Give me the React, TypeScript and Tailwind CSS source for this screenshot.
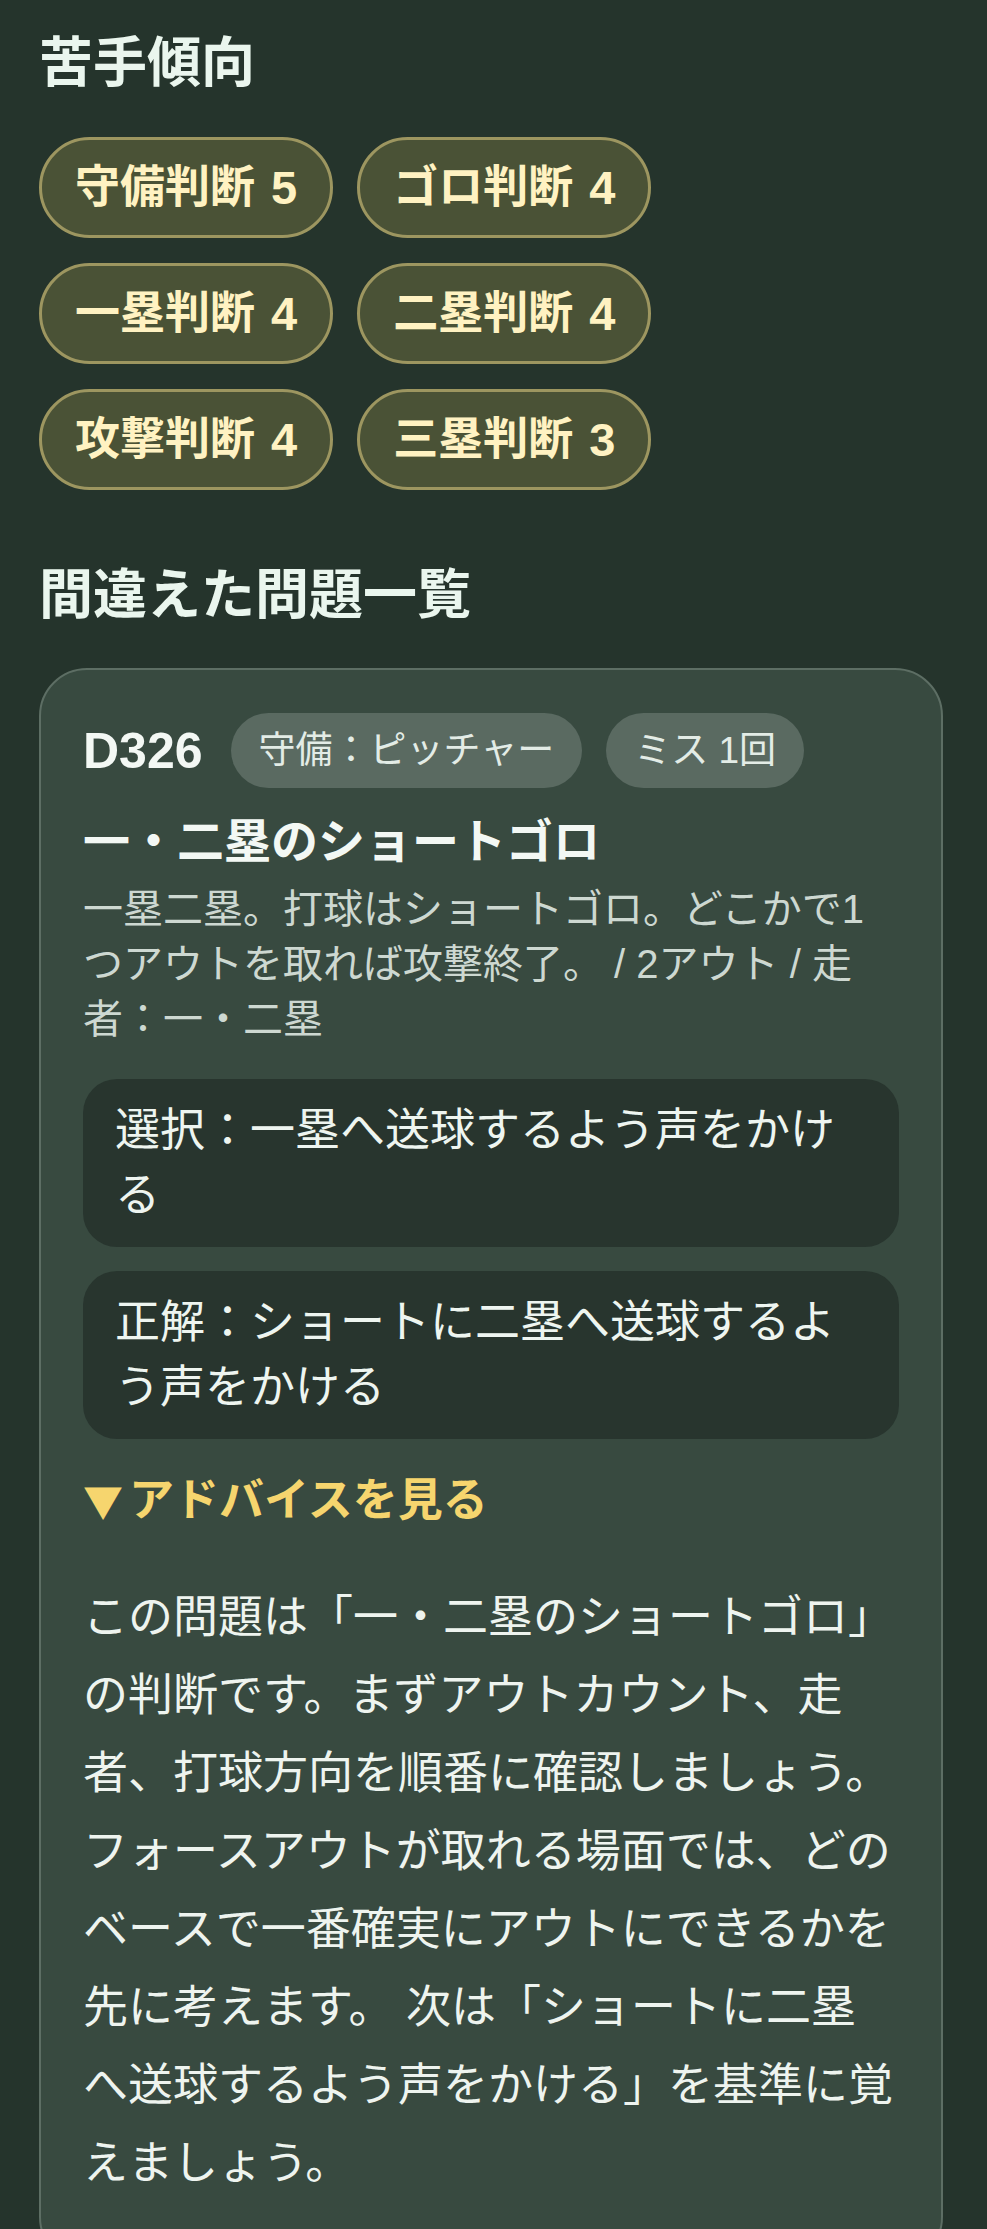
const weakPoints = [
  { label: '守備判断', count: 5 },
  { label: 'ゴロ判断', count: 4 },
  { label: '一塁判断', count: 4 },
  { label: '二塁判断', count: 4 },
  { label: '攻撃判断', count: 4 },
  { label: '三塁判断', count: 3 },
]

const mistake = {
  id: 'D326',
  category: '守備：ピッチャー',
  misses: 1,
  title: '一・二塁のショートゴロ',
  situation: '一塁二塁。打球はショートゴロ。どこかで1つアウトを取れば攻撃終了。 / 2アウト / 走者：一・二塁',
  chosen: '一塁へ送球するよう声をかける',
  correct: 'ショートに二塁へ送球するよう声をかける',
  advice:
    'この問題は「一・二塁のショートゴロ」の判断です。まずアウトカウント、走者、打球方向を順番に確認しましょう。フォースアウトが取れる場面では、どのベースで一番確実にアウトにできるかを先に考えます。 次は「ショートに二塁へ送球するよう声をかける」を基準に覚えましょう。',
}

function WeakPill({ label, count }: { label: string; count: number }) {
  return (
    <span className="flex h-[101px] items-center rounded-full border-[3px] border-[#9d9660] bg-[#4a5236] px-[33px] text-[45px] font-bold leading-none text-[#fff2c2]">
      {label}
      <span className="ml-[16px] text-[47px]">{count}</span>
    </span>
  )
}

export default function App() {
  return (
    <div className="min-h-screen bg-[#25342c] pl-[39px] pr-[44px] pt-[26px] pb-[80px] font-['Liberation_Sans','Noto_Sans_CJK_JP',sans-serif]">
      <h2 className="text-[54px] font-bold leading-[74px] text-[#eaf6ee]">苦手傾向</h2>
      <div className="mt-[37px] flex flex-wrap gap-x-[24px] gap-y-[25px]">
        {weakPoints.map((w) => (
          <WeakPill key={w.label} label={w.label} count={w.count} />
        ))}
      </div>

      <h2 className="mt-[68px] text-[54px] font-bold leading-[74px] text-[#eaf6ee]">間違えた問題一覧</h2>

      <div className="mt-[36px] rounded-[48px] border-2 border-[#5d6e64] bg-[#384a40] px-[42px] pt-[43px] pb-[60px]">
        <div className="flex items-center gap-[24px]">
          <span className="mr-[4px] text-[50px] font-bold leading-none text-[#f3f8f4]">{mistake.id}</span>
          <span className="flex h-[75px] items-center rounded-full bg-[#5a6a61] px-[28px] text-[37px] leading-none text-[#e3ece6]">
            {mistake.category}
          </span>
          <span className="flex h-[75px] items-center rounded-full bg-[#5a6a61] px-[28px] text-[37px] leading-none text-[#e3ece6]">
            {`ミス ${mistake.misses}回`}
          </span>
        </div>

        <h3 className="mt-[20px] text-[47px] font-bold leading-[68px] text-[#f3f8f4]">{mistake.title}</h3>
        <p className="mt-[6px] text-[40px] leading-[55px] text-[#cdd8d1]">{mistake.situation}</p>

        <div className="mt-[32px] flex flex-col gap-[24px]">
          <div className="rounded-[34px] bg-[#28352e] px-[32px] py-[19px] text-[45px] leading-[65px] text-[#eef5f0]">
            {`選択：${mistake.chosen}`}
          </div>
          <div className="rounded-[34px] bg-[#28352e] px-[32px] py-[19px] text-[45px] leading-[65px] text-[#eef5f0]">
            {`正解：${mistake.correct}`}
          </div>
        </div>

        <div className="mt-[30px] flex items-center text-[45px] font-bold leading-[63px] text-[#f6d56e]">
          <span className="mr-[6px] font-['Noto_Sans_CJK_JP',sans-serif] text-[40px]">▼</span>
          アドバイスを見る
        </div>
        <p className="mt-[47px] text-[45px] leading-[78px] text-[#eef4ef]">{mistake.advice}</p>
      </div>
    </div>
  )
}
